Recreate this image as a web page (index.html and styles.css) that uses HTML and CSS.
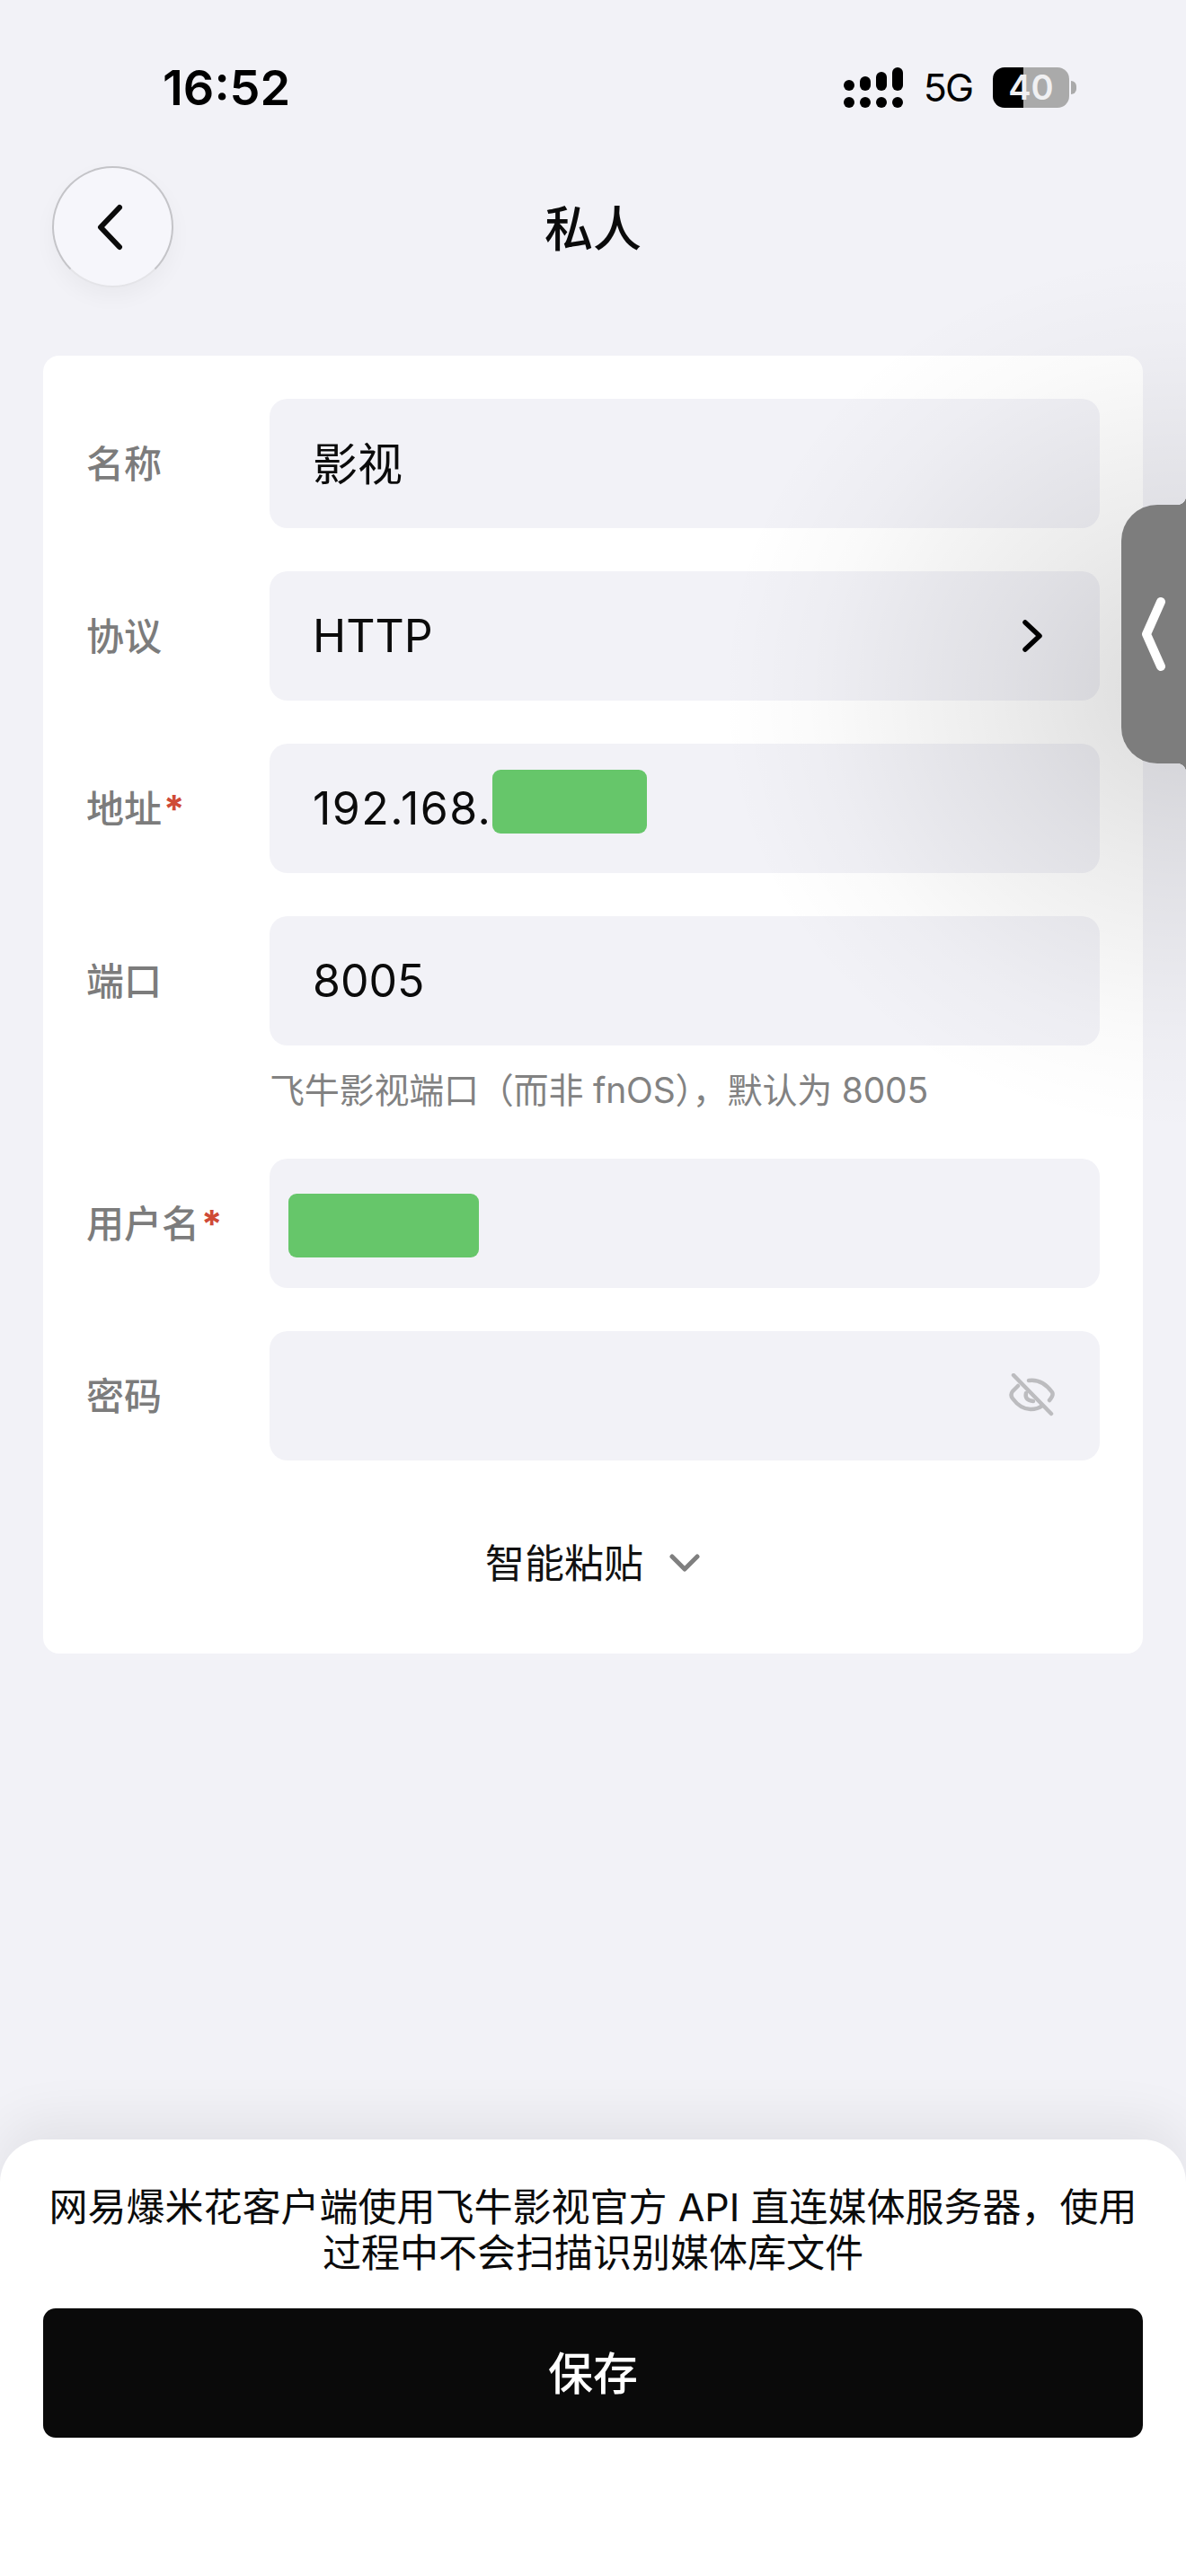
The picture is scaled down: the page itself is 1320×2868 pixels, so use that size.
FILE: index.html
```html
<!DOCTYPE html>
<html lang="zh-CN">
<head>
  <meta charset="UTF-8">
  <meta name="viewport" content="width=device-width, initial-scale=1.0">
  <title>私人</title>
  <link rel="stylesheet" href="styles.css">
</head>
<body>
  <div class="page">
    <div class="status">
      <span class="time">16:52</span>
      <div class="status-right">
        <svg class="signal" width="66" height="45" viewBox="0 0 66 45" fill="#000">
          <rect x="0" y="14" width="12" height="12" rx="6"/>
          <rect x="18" y="10" width="12" height="16" rx="6"/>
          <rect x="36" y="5" width="12" height="21" rx="6"/>
          <rect x="54" y="0" width="12" height="26" rx="6"/>
          <circle cx="6" cy="39" r="6"/>
          <circle cx="24" cy="39" r="6"/>
          <circle cx="42" cy="39" r="6"/>
          <circle cx="60" cy="39" r="6"/>
        </svg>
        <span class="net">5G</span>
        <div class="battery"><span class="battery-num">40</span></div>
        <span class="battery-cap"></span>
      </div>
    </div>

    <div class="nav">
      <div class="back">
        <svg width="30" height="52" viewBox="0 0 30 52" fill="none" stroke="#0b0b0b" stroke-width="6" stroke-linecap="round" stroke-linejoin="round">
          <path d="M25 4 L4 26 L25 48"/>
        </svg>
      </div>
      <div class="title">私人</div>
    </div>

    <div class="card">
      <div class="row">
        <div class="label">名称</div>
        <div class="field"><span class="value-cjk">影视</span></div>
      </div>
      <div class="row">
        <div class="label">协议</div>
        <div class="field">
          <span>HTTP</span>
          <svg class="field-icon arrow" width="24" height="38" viewBox="0 0 24 38" fill="none" stroke="#000" stroke-width="5.5" stroke-linecap="round" stroke-linejoin="round">
            <path d="M4 4 L20 19 L4 34"/>
          </svg>
        </div>
      </div>
      <div class="row">
        <div class="label">地址<span class="req">*</span></div>
        <div class="field">
          <span class="ip">192.168.</span>
          <span class="mask mask-ip"></span>
        </div>
      </div>
      <div class="row row-hinted">
        <div class="label">端口</div>
        <div class="field">8005</div>
      </div>
      <div class="hint">飞牛影视端口（而非 fnOS），默认为 8005</div>
      <div class="row">
        <div class="label">用户名<span class="req">*</span></div>
        <div class="field">
          <span class="mask mask-user"></span>
        </div>
      </div>
      <div class="row">
        <div class="label">密码</div>
        <div class="field">
          <svg class="field-icon eye" width="52" height="50" viewBox="22 30 52 50" fill="none" stroke="#bcbcbf" stroke-width="4.5" stroke-linecap="round" stroke-linejoin="round">
            <path d="M28 32 L70 75"/>
            <path d="M33 44 L27 50 Q24 54 27 58 Q36 70 47 70 Q55 70 60 66"/>
            <path d="M45 38 Q60 36 71 51 Q73 54 68 60"/>
            <path d="M42 52 Q40 60 50 61"/>
          </svg>
        </div>
      </div>
      <div class="paste">
        <span>智能粘贴</span>
        <svg width="36" height="24" viewBox="0 0 36 24" fill="none" stroke="#7f7f7f" stroke-width="5" stroke-linecap="round" stroke-linejoin="round">
          <path d="M4 4 L18 18 L32 4"/>
        </svg>
      </div>
    </div>

    <div class="sheet">
      <p class="note">网易爆米花客户端使用飞牛影视官方 API 直连媒体服务器，使用过程中不会扫描识别媒体库文件</p>
      <button class="save" type="button"><span class="save-text">保存</span></button>
    </div>

    <div class="glow"></div>
    <div class="handle">
      <svg width="30" height="84" viewBox="0 0 30 84" fill="none" stroke="#fff" stroke-width="10" stroke-linecap="round" stroke-linejoin="round">
        <path d="M23 6 L7 42 L23 78"/>
      </svg>
    </div>
  </div>
</body>
</html>
```

FILE: styles.css
```css
* {
  box-sizing: border-box;
}
body {
  margin: 0;
  padding: 0;
  background-color: #f2f2f7;
  color: #0b0b0b;
  font-family: Inter, "Noto Sans CJK SC", sans-serif;
}
.page {
  position: relative;
  width: 1320px;
  height: 2868px;
  display: flex;
  flex-direction: column;
  overflow: hidden;
}

/* status bar */
.status {
  height: 185px;
  padding: 9px 122px 0 181px;
  display: flex;
  align-items: center;
  justify-content: space-between;
}
.time {
  font-size: 54px;
  font-weight: 600;
  color: #000;
}
.status-right {
  display: flex;
  align-items: center;
}
.net {
  font-size: 43px;
  letter-spacing: -2px;
  margin-left: 23px;
  color: #000;
}
.battery {
  width: 85px;
  height: 45px;
  margin-left: 23px;
  border-radius: 13px;
  background: linear-gradient(90deg, #000 40%, #aaaaaa 40%);
  display: flex;
  align-items: center;
  justify-content: center;
}
.battery-num {
  font-size: 38px;
  font-weight: 600;
  color: #f0f0f2;
}
.battery-cap {
  width: 6px;
  height: 15px;
  margin-left: 2px;
  border-radius: 0 8px 8px 0;
  background-color: #aaaaaa;
}

/* nav */
.nav {
  display: grid;
  grid-template-columns: 135px 1fr 135px;
  align-items: center;
  padding: 0 58px;
  height: 135px;
  margin-bottom: 76px;
}
.back {
  width: 135px;
  height: 135px;
  border-radius: 50%;
  background-color: #f6f6fb;
  border: 2px solid #c4c4c8;
  border-bottom-color: #e4e4e8;
  box-shadow: 0 10px 24px rgba(0, 0, 0, 0.04);
  display: flex;
  align-items: center;
  justify-content: center;
  padding-right: 6px;
}
.title {
  font-size: 54px;
  font-weight: 500;
  text-align: center;
  padding-bottom: 2px;
}

/* form card */
.card {
  margin: 0 48px;
  padding: 48px 48px 0;
  background-color: #fff;
  border-radius: 18px;
  height: 1445px;
}
.row {
  display: flex;
  align-items: center;
  margin-bottom: 48px;
}
.row-hinted {
  margin-bottom: 0;
}
.label {
  width: 204px;
  flex-shrink: 0;
  padding-bottom: 6px;
  font-size: 42px;
  font-weight: 500;
  color: #7c7c7c;
}
.req {
  color: #cf4a36;
  font-weight: 700;
  margin-left: 2px;
}
.field {
  position: relative;
  flex: 1;
  height: 144px;
  padding: 0 48px;
  border-radius: 20px;
  background-color: #f2f2f7;
  font-size: 50px;
  display: flex;
  align-items: center;
  justify-content: space-between;
}
.value-cjk {
  margin-bottom: 6px;
}
.ip {
  letter-spacing: 1.5px;
}
.field-icon {
  margin-left: auto;
}
.arrow {
  margin-right: 15px;
}
.eye {
  margin-right: 2px;
}
.mask {
  position: absolute;
  background-color: #66c66a;
  border-radius: 9px;
}
.mask-ip {
  left: 248px;
  top: 29px;
  width: 172px;
  height: 71px;
}
.mask-user {
  left: 21px;
  top: 39px;
  width: 212px;
  height: 71px;
}
.hint {
  margin-left: 204px;
  padding: 25px 0 51px;
  line-height: 50px;
  font-size: 39px;
  letter-spacing: -0.2px;
  color: #828282;
}
.paste {
  margin-top: 91px;
  line-height: 48px;
  display: flex;
  align-items: center;
  justify-content: center;
  gap: 28px;
  font-size: 44px;
  color: #111;
}

/* bottom sheet */
.sheet {
  margin-top: auto;
  height: 486px;
  padding: 50px 48px 0;
  background-color: #fff;
  border-radius: 48px 48px 0 0;
  box-shadow: 0 -20px 60px rgba(0, 0, 0, 0.07);
}
.note {
  margin: 0;
  font-size: 43px;
  line-height: 51px;
  text-align: center;
  color: #0b0b0b;
}
.save {
  display: block;
  width: 100%;
  height: 144px;
  margin-top: 36px;
  border: none;
  border-radius: 14px;
  background-color: #0a0a0a;
  color: #fff;
  font-family: inherit;
  font-size: 50px;
  font-weight: 500;
}
.save-text {
  display: block;
  padding-bottom: 6px;
}

/* side handle and the shade it throws */
.glow {
  position: absolute;
  inset: 0;
  background: radial-gradient(ellipse 520px 490px at 1320px 770px, rgba(0, 0, 0, 0.14), rgba(0, 0, 0, 0.075) 40%, rgba(0, 0, 0, 0.02) 78%, rgba(0, 0, 0, 0) 100%);
  pointer-events: none;
}
.handle {
  position: absolute;
  top: 562px;
  right: 0;
  width: 72px;
  height: 288px;
  border-radius: 40px 0 0 40px;
  background-color: #7d7d7d;
  display: flex;
  align-items: center;
  padding-left: 21px;
}
.handle::before,
.handle::after {
  content: "";
  position: absolute;
  right: 0;
  width: 10px;
  height: 10px;
}
.handle::before {
  top: -10px;
  background: radial-gradient(circle at 0 0, transparent 10px, #7d7d7d 10.5px);
}
.handle::after {
  bottom: -10px;
  background: radial-gradient(circle at 0 100%, transparent 10px, #7d7d7d 10.5px);
}
```
